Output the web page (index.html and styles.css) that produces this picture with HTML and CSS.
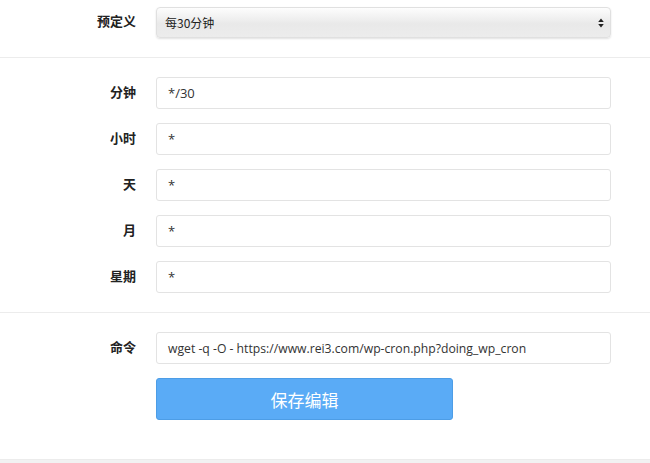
FILE: index.html
```html
<!DOCTYPE html>
<html>
<head>
<meta charset="utf-8">
<link rel="stylesheet" href="styles.css">
</head>
<body>
<div class="page">
  <div class="section first">
    <div class="row">
      <label class="lbl">预定义</label>
      <div class="select">
        <span>每30分钟</span>
        <svg class="arrows" width="6" height="10" viewBox="0 0 6 10"><path d="M3 0.5L5.8 4H0.2Z M3 9.5L5.8 6H0.2Z" fill="#222"/></svg>
      </div>
    </div>
  </div>
  <div class="section">
    <div class="row"><label class="lbl">分钟</label><div class="input">*/30</div></div>
    <div class="row"><label class="lbl">小时</label><div class="input">*</div></div>
    <div class="row"><label class="lbl">天</label><div class="input">*</div></div>
    <div class="row"><label class="lbl">月</label><div class="input">*</div></div>
    <div class="row"><label class="lbl">星期</label><div class="input">*</div></div>
  </div>
  <div class="section last">
    <div class="row"><label class="lbl">命令</label><div class="input cmd">wget -q -O - https://www.rei3.com/wp-cron.php?doing_wp_cron</div></div>
    <div class="row"><span class="lbl"></span><button class="btn">保存编辑</button></div>
  </div>
  <div class="foot"></div>
</div>
</body>
</html>
```
FILE: styles.css
```css
html, body { margin: 0; padding: 0; background: #fff; }
body { font-family: "Open Sans", "Noto Sans CJK SC", sans-serif; color: #333; }
.page { width: 650px; height: 463px; overflow: hidden; }
.section { padding: 19px 0; border-bottom: 1px solid #ececec; display: flex; flex-direction: column; gap: 14px; }
.section.first { padding: 7px 0 19px; }
.section.last { padding-bottom: 39px; }
.row { display: flex; align-items: center; gap: 20px; }
.lbl { width: 136px; text-align: right; font-family: "Noto Sans CJK SC", sans-serif; font-weight: bold; font-size: 13px; line-height: 16px; color: #222; flex: none; margin-top: -3px; }
.input { box-sizing: border-box; width: 455px; height: 32px; border: 1px solid #e3e3e3; border-radius: 3px; padding: 0 11px; display: flex; align-items: center; font-size: 13px; color: #333; background: #fff; }
.input.cmd { font-size: 12.2px; }
.select { box-sizing: border-box; width: 455px; height: 31px; border-radius: 4px; border: 1px solid #e0e0e0; background: linear-gradient(#fdfdfd, #e9e9e9 55%, #ececec); box-shadow: 0 1px 2px rgba(0,0,0,0.12); display: flex; align-items: center; justify-content: space-between; padding: 0 6px 0 8px; font-family: "Noto Sans CJK SC", sans-serif; font-size: 12px; color: #222; }
.arrows { display: block; }
.btn { box-sizing: border-box; width: 297px; height: 42px; border: 1px solid #4d9de6; border-radius: 3px; background: #5aabf6; color: #fff; font-family: "Noto Sans CJK SC", sans-serif; font-size: 17px; padding: 0; cursor: pointer; }
.foot { height: 10px; background: #f2f2f2; }
```
